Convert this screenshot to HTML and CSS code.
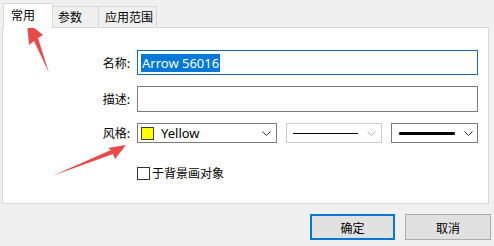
FILE: index.html
```html
<!DOCTYPE html>
<html lang="zh">
<head>
<meta charset="utf-8">
<title>属性</title>
<link rel="stylesheet" href="styles.css">
</head>
<body>
<div class="tabs">
  <div class="tab active">常用</div>
  <div class="tab tab-params">参数</div>
  <div class="tab tab-scope">应用范围</div>
</div>
<div class="panel">
  <div class="form">
    <div class="label row-name">名称:</div>
    <div class="field focused row-name"><span class="sel">Arrow 56016</span></div>
    <div class="label row-desc">描述:</div>
    <div class="field row-desc"></div>
    <div class="label row-style">风格:</div>
    <div class="styles row-style">
      <div class="combo combo-color">
        <span class="swatch"></span>
        <span class="combo-text">Yellow</span>
        <svg class="chev" width="9" height="5" viewBox="0 0 9 5"><polyline points="0.5,0.5 4.5,4.5 8.5,0.5" fill="none" stroke="#333" stroke-width="1"/></svg>
      </div>
      <div class="combo combo-line disabled">
        <span class="line thin"></span>
        <svg class="chev" width="9" height="5" viewBox="0 0 9 5"><polyline points="0.5,0.5 4.5,4.5 8.5,0.5" fill="none" stroke="#b0b0b0" stroke-width="1"/></svg>
      </div>
      <div class="combo combo-weight">
        <span class="line thick"></span>
        <svg class="chev" width="9" height="5" viewBox="0 0 9 5"><polyline points="0.5,0.5 4.5,4.5 8.5,0.5" fill="none" stroke="#333" stroke-width="1"/></svg>
      </div>
    </div>
    <div class="check row-check">
      <span class="box"></span>
      <span class="check-text">于背景画对象</span>
    </div>
  </div>
</div>
<div class="footer">
  <button class="btn default">确定</button>
  <button class="btn">取消</button>
</div>
<svg class="annot" width="494" height="246" viewBox="0 0 494 246">
  <polygon points="27,22 43,35 38,38 49,73 34,41 29,45" fill="#e84a4a"/>
  <polygon points="126,145 115,159 113,154 52,176 111,150 108,148" fill="#e84a4a"/>
</svg>
</body>
</html>
```

FILE: styles.css
```css
* { box-sizing: border-box; }

body {
  margin: 0;
  width: 494px;
  height: 246px;
  overflow: hidden;
  position: relative;
  background: #f0f0f0;
  color: #000;
  font-family: "Noto Sans", "Noto Sans CJK SC", sans-serif;
  font-size: 12px;
}

.tabs {
  display: flex;
  align-items: flex-end;
  height: 27px;
  padding: 3px 0 0 3px;
}

.tab {
  height: 21px;
  border: 1px solid #d9d9d9;
  border-bottom: none;
  background: #f0f0f0;
  font-family: "Noto Sans CJK SC", sans-serif;
  font-size: 12px;
  line-height: 19px;
  padding-left: 5px;
}

.tab.active {
  position: relative;
  z-index: 1;
  width: 50px;
  height: 25px;
  margin-bottom: -1px;
  background: #fff;
  padding-left: 7px;
  line-height: 22px;
}

.tab-params { width: 46px; border-left: none; }
.tab-scope { width: 58px; border-left: none; padding-left: 6px; }

.panel {
  margin: 0 5px 0 2px;
  height: 177px;
  border: 1px solid #d9d9d9;
  background: #fff;
  padding-top: 22px;
}

.form {
  display: grid;
  grid-template-columns: 127px 341px;
  column-gap: 7px;
  align-items: center;
}

.label {
  text-align: right;
  font-family: "Noto Sans CJK SC", sans-serif;
  font-size: 12px;
  line-height: 16px;
}

.field {
  height: 25px;
  border: 1px solid #7a7a7a;
  background: #fff;
  display: flex;
  align-items: center;
  padding-left: 3px;
}

.row-desc { margin-top: 11px; }
.field.row-desc { height: 26px; }

.field.focused { border-color: #1a6bb0; }

.sel {
  background: #0078d7;
  color: #fff;
  font-size: 13px;
  line-height: 18px;
  padding: 0 1px;
}

.row-style { margin-top: 11px; }

.styles {
  display: flex;
  gap: 9px;
}

.combo {
  height: 20px;
  border: 1px solid #7a7a7a;
  background: #fff;
  display: flex;
  align-items: center;
  padding: 0 4px 0 3px;
}

.combo-color { width: 140px; }
.combo-line { width: 96px; padding-left: 6px; }
.combo-weight { width: 87px; padding-left: 7px; }
.combo.disabled { border-color: #cccccc; }

.swatch {
  width: 13px;
  height: 13px;
  background: #ffff00;
  border: 1px solid #404040;
  flex: none;
}

.combo-text {
  margin-left: 7px;
  font-size: 13px;
  line-height: 16px;
  flex: 1;
}

.line { flex: none; }
.line.thin { width: 65px; height: 1px; background: #000; margin-right: auto; }
.line.thick { width: 56px; height: 3px; background: #000; border-radius: 1px; margin-right: auto; }

.chev { flex: none; display: block; }
.combo-color .chev { margin-right: 1px; }
.combo-line .chev { margin-right: 1px; }

.check {
  grid-column: 2;
  margin-top: 22px;
  display: flex;
  align-items: center;
  gap: 2px;
}

.box {
  width: 13px;
  height: 13px;
  border: 1px solid #333;
  background: #fff;
}

.check-text {
  font-family: "Noto Sans CJK SC", sans-serif;
  font-size: 12px;
  line-height: 16px;
}

.footer {
  display: flex;
  justify-content: flex-end;
  gap: 10px;
  padding: 10px 3px 0 0;
}

.btn {
  width: 86px;
  height: 26px;
  background: #e1e1e1;
  border: 1px solid #adadad;
  font-family: "Noto Sans CJK SC", sans-serif;
  font-size: 12px;
  color: #000;
  padding: 0;
}

.btn.default {
  width: 85px;
  border: 2px solid #0078d7;
}

.annot {
  position: absolute;
  left: 0;
  top: 0;
  pointer-events: none;
}
```
